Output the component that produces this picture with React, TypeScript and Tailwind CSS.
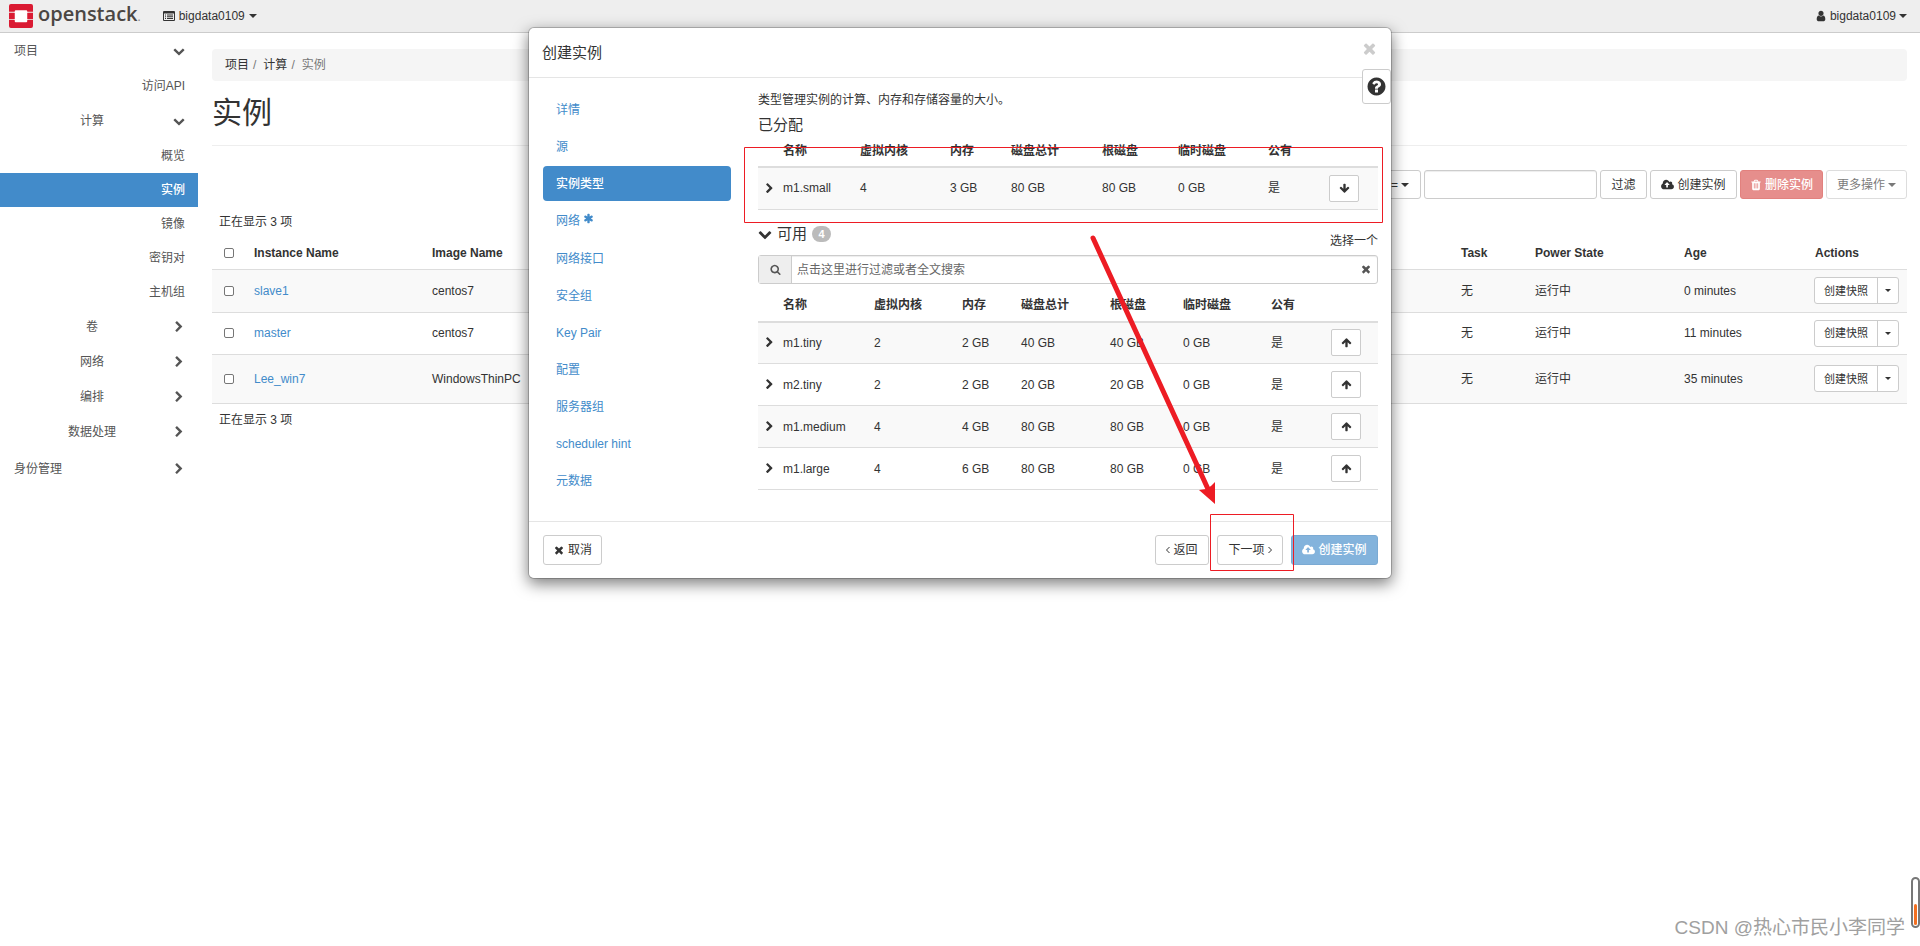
import type { ReactNode } from "react";

const GLYPHS = {
  times:
    "M1490 1322q0 40-28 68l-136 136q-28 28-68 28t-68-28l-294-294-294 294q-28 28-68 28t-68-28l-136-136q-28-28-28-68t28-68l294-294-294-294q-28-28-28-68t28-68l136-136q28-28 68-28t68 28l294 294 294-294q28-28 68-28t68 28l136 136q28 28 28 68t-28 68l-294 294 294 294q28 28 28 68z",
  right:
    "M1363 877l-742 742q-19 19-45 19t-45-19l-166-166q-19-19-19-45t19-45l531-531-531-531q-19-19-19-45t19-45l166-166q19-19 45-19t45 19l742 742q19 19 19 45t-19 45z",
  down:
    "M1683 808l-742 741q-19 19-45 19t-45-19l-742-741q-19-19-19-45.5t19-45.5l166-165q19-19 45-19t45 19l531 531 531-531q19-19 45-19t45 19l166 165q19 19 19 45.5t-19 45.5z",
  arrow:
    "M1675 971q0 51-37 90l-75 75q-38 38-91 38-54 0-90-38l-294-293v704q0 52-37.5 84.5t-90.5 32.5h-128q-53 0-90.5-32.5t-37.5-84.5v-704l-294 293q-36 38-90 38t-90-38l-75-75q-38-38-38-90 0-53 38-91l651-651q35-37 90-37 54 0 91 37l651 651q37 39 37 91z",
  question:
    "M1024 1376v-192q0-14-9-23t-23-9h-192q-14 0-23 9t-9 23v192q0 14 9 23t23 9h192q14 0 23-9t9-23zm256-672q0-88-55.5-163t-138.5-116-170-41q-243 0-371 213-15 24 8 42l132 100q7 6 19 6 16 0 25-12 53-68 86-92 34-24 86-24 48 0 85.5 26t37.5 59q0 38-20 61t-68 45q-63 28-115.5 86.5t-52.5 125.5v36q0 14 9 23t23 9h192q14 0 23-9t9-23q0-19 21.5-49.5t54.5-49.5q32-18 49-28.5t46-35 44.5-48 28-60.5 12.5-81zm384 192q0 209-103 385.5t-279.5 279.5-385.5 103-385.5-103-279.5-279.5-103-385.5 103-385.5 279.5-279.5 385.5-103 385.5 103 279.5 279.5 103 385.5z",
  cloud:
    "M1216 864q0-14-9-23l-352-352q-9-9-23-9t-23 9l-351 351q-10 12-10 24 0 14 9 23t23 9h224v352q0 13 9.5 22.5t22.5 9.5h192q13 0 22.5-9.5t9.5-22.5v-352h224q13 0 22.5-9.5t9.5-22.5zm640 288q0 159-112.5 271.5t-271.5 112.5h-1088q-185 0-316.5-131.5t-131.5-316.5q0-130 70-240t188-165q-2-30-2-43 0-212 150-362t362-150q156 0 285.5 87t188.5 231q71-62 166-62 106 0 181 75t75 181q0 76-41 138 130 31 213.5 135.5t83.5 238.5z",
  trash:
    "M704 1376v-704q0-14-9-23t-23-9h-64q-14 0-23 9t-9 23v704q0 14 9 23t23 9h64q14 0 23-9t9-23zm256 0v-704q0-14-9-23t-23-9h-64q-14 0-23 9t-9 23v704q0 14 9 23t23 9h64q14 0 23-9t9-23zm256 0v-704q0-14-9-23t-23-9h-64q-14 0-23 9t-9 23v704q0 14 9 23t23 9h64q14 0 23-9t9-23zm-544-992h448l-48-117q-7-9-17-11h-317q-10 2-17 11zm928 32v64q0 14-9 23t-23 9h-96v948q0 83-47 143.5t-113 60.5h-832q-66 0-113-58.5t-47-141.5v-952h-96q-14 0-23-9t-9-23v-64q0-14 9-23t23-9h309l70-167q15-37 54-63t79-26h320q40 0 79 26t54 63l70 167h309q14 0 23 9t9 23z",
  search:
    "M1216 832q0-185-131.5-316.5t-316.5-131.5-316.5 131.5-131.5 316.5 131.5 316.5 316.5 131.5 316.5-131.5 131.5-316.5zm512 832q0 52-38 90t-90 38q-54 0-90-38l-343-342q-179 124-399 124-143 0-273.5-55.5t-225-150-150-225-55.5-273.5 55.5-273.5 150-225 225-150 273.5-55.5 273.5 55.5 225 150 150 225 55.5 273.5q0 220-124 399l343 343q37 37 37 90z",
  user:
    "M1536 1399q0 109-62.5 187t-150.5 78h-854q-88 0-150.5-78t-62.5-187q0-85 8.5-160.5t31.5-152 58.5-131 94-89 134.5-34.5q131 128 313 128t313-128q76 0 134.5 34.5t94 89 58.5 131 31.5 152 8.5 160.5zm-256-887q0 159-112.5 271.5t-271.5 112.5-271.5-112.5-112.5-271.5 112.5-271.5 271.5-112.5 271.5 112.5 112.5 271.5z",
  asterisk:
    "M1546 1050q46 26 59.5 77.5t-12.5 97.5l-64 110q-26 46-77.5 59.5t-97.5-12.5l-266-153v307q0 52-38 90t-90 38h-128q-52 0-90-38t-38-90v-307l-266 153q-46 26-97.5 12.5t-77.5-59.5l-64-110q-26-46-12.5-97.5t59.5-77.5l266-154-266-154q-46-26-59.5-77.5t12.5-97.5l64-110q26-46 77.5-59.5t97.5 12.5l266 153v-307q0-52 38-90t90-38h128q52 0 90 38t38 90v307l266-153q46-26 97.5-12.5t77.5 59.5l64 110q26 46 12.5 97.5t-59.5 77.5l-266 154z",
};

function Glyph({ name, className = "size-3" }: { name: keyof typeof GLYPHS; className?: string }) {
  return (
    <svg
      viewBox={name === "cloud" ? "-64 0 1920 1792" : "0 0 1792 1792"}
      fill="currentColor"
      aria-hidden="true"
      className={`shrink-0 ${className}`}
    >
      <path d={GLYPHS[name]} />
    </svg>
  );
}

function Caret() {
  return (
    <svg viewBox="0 0 8 4" fill="currentColor" aria-hidden="true" className="h-1 w-2 shrink-0">
      <path d="M0 0h8L4 4z" />
    </svg>
  );
}

function Angle({ flip = false }: { flip?: boolean }) {
  return (
    <svg viewBox="0 0 4 8" fill="none" stroke="currentColor" aria-hidden="true" className="h-2 w-1 shrink-0">
      <path d={flip ? "M.5 1l3 3-3 3" : "M3.5 1l-3 3 3 3"} />
    </svg>
  );
}

const TONES = {
  plain: "border-[#ccc] bg-white",
  muted: "border-[#ccc] bg-white opacity-65",
  danger: "border-[#d43f3a] bg-[#d9534f] font-medium text-white opacity-65",
  primary: "border-[#357ebd] bg-[#428bca] font-medium text-white opacity-65",
};

function Button({
  children,
  tone = "plain",
  className = "justify-center",
}: {
  children: ReactNode;
  tone?: keyof typeof TONES;
  className?: string;
}) {
  return (
    <button
      type="button"
      className={`flex items-center gap-[3px] rounded-[3px] border whitespace-nowrap ${TONES[tone]} ${className}`}
    >
      {children}
    </button>
  );
}

function Logo() {
  return (
    <a href="#home" aria-label="openstack" className="flex items-center gap-[5px] pl-[9px] text-[#4b4643]">
      <svg viewBox="0 0 25 25" aria-hidden="true" className="size-6">
        <path fill="#fff" d="M5 5h15v15H5z" />
        <path
          fill="#da1a32"
          d="M2 0h21a2 2 0 0 1 2 2v6h-6V7.500a1 1 0 0 0-1-1H7a1 1 0 0 0-1 1V8H0V2a2 2 0 0 1 2-2zM0 9h6v6.500H0zM19 9h6v6.500h-6zM0 16.500h6V18a1 1 0 0 0 1 1h11a1 1 0 0 0 1-1v-1.500h6V23a2 2 0 0 1-2 2H2a2 2 0 0 1-2-2z"
        />
      </svg>
      <span className="pb-0.5 font-['Open_Sans',sans-serif] text-[20px] leading-6 font-semibold">
        openstack<span className="text-[12px] font-normal text-[#8a8683]">.</span>
      </span>
    </a>
  );
}

function Header() {
  return (
    <header className="flex h-[33px] items-center justify-between border-b border-[#ccc] bg-[#eee]">
      <div className="flex items-center gap-[22px]">
        <Logo />
        <button type="button" className="flex items-center gap-1">
          <svg viewBox="0 0 12 10" aria-hidden="true" className="h-2.5 w-3">
            <path
              fill="#333"
              d="M1 0h10a1 1 0 0 1 1 1v8a1 1 0 0 1-1 1H1a1 1 0 0 1-1-1V1a1 1 0 0 1 1-1zM1 2.500V9h10V2.500zM2 3.500h1v1H2zM4 3.500h6v1H4zM2 5.300h1v1H2zM4 5.300h6v1H4zM2 7.100h1v1H2zM4 7.100h6v1H4z"
              fillRule="evenodd"
            />
          </svg>
          bigdata0109
          <Caret />
        </button>
      </div>
      <button type="button" className="mr-[13px] flex items-center gap-[3px]">
        <Glyph name="user" />
        bigdata0109
        <Caret />
      </button>
    </header>
  );
}

function Group({ label, open = false, root = false }: { label: string; open?: boolean; root?: boolean }) {
  return (
    <button type="button" className="flex h-[35px] w-full items-center justify-between pr-[13px] pl-[14px]">
      <span className={root ? "" : "w-[156px] text-center"}>{label}</span>
      <Glyph name={open ? "down" : "right"} />
    </button>
  );
}

function Leaf({ label, active = false }: { label: string; active?: boolean }) {
  return (
    <a
      href="#panel"
      className={`flex h-[34px] items-center justify-end pr-[13px] ${active ? "bg-[#428bca] font-medium text-white" : ""}`}
    >
      {label}
    </a>
  );
}

function Sidebar() {
  return (
    <nav className="w-[198px] shrink-0 text-[#555]">
      <Group label="项目" open root />
      <div className="pt-px">
        <Leaf label="访问API" />
      </div>
      <Group label="计算" open />
      <div className="pt-px">
        <Leaf label="概览" />
        <Leaf label="实例" active />
        <Leaf label="镜像" />
        <Leaf label="密钥对" />
        <Leaf label="主机组" />
      </div>
      <div className="pb-0.5">
        <Group label="卷" />
        <Group label="网络" />
        <Group label="编排" />
        <Group label="数据处理" />
      </div>
      <Group label="身份管理" root />
    </nav>
  );
}

const INSTANCES = [
  { name: "slave1", image: "centos7", age: "0 minutes", row: "h-[43px] bg-[#f9f9f9]" },
  { name: "master", image: "centos7", age: "11 minutes", row: "h-[42px]" },
  { name: "Lee_win7", image: "WindowsThinPC", age: "35 minutes", row: "h-[49px] bg-[#f9f9f9]" },
];

function Tick({ label }: { label: string }) {
  return (
    <input
      type="checkbox"
      aria-label={label}
      className="mx-auto block size-2.5 appearance-none rounded-[2px] border border-[#767676] bg-white"
    />
  );
}

function InstanceTable() {
  return (
    <table className="w-full table-fixed text-left">
      <colgroup>
        <col className="w-[34px]" />
        <col className="w-[178px]" />
        <col />
        <col className="w-[74px]" />
        <col className="w-[149px]" />
        <col className="w-[131px]" />
        <col className="w-[100px]" />
      </colgroup>
      <thead>
        <tr className="h-[35px] border-b border-[#ddd]">
          <th className="pt-1">
            <Tick label="全选" />
          </th>
          <th className="px-2 pt-1">Instance Name</th>
          <th className="px-2 pt-1">Image Name</th>
          <th className="px-2 pt-1">Task</th>
          <th className="px-2 pt-1">Power State</th>
          <th className="px-2 pt-1">Age</th>
          <th className="px-2 pt-1">Actions</th>
        </tr>
      </thead>
      <tbody>
        {INSTANCES.map((item) => (
          <tr key={item.name} className={`border-b border-[#ddd] ${item.row}`}>
            <td>
              <Tick label={item.name} />
            </td>
            <td className="px-2">
              <a href="#instance" className="text-[#428bca]">
                {item.name}
              </a>
            </td>
            <td className="px-2">{item.image}</td>
            <td className="px-2">无</td>
            <td className="px-2">运行中</td>
            <td className="px-2">{item.age}</td>
            <td className="px-[7px]">
              <div className="flex h-[27px] w-[85px] rounded-[3px] border border-[#ccc] bg-white text-[11px]">
                <button type="button" className="flex-1 border-r border-[#ccc] whitespace-nowrap">
                  创建快照
                </button>
                <button type="button" aria-label="更多" className="flex w-5 items-center justify-center">
                  <svg viewBox="0 0 6 3" fill="currentColor" aria-hidden="true" className="h-[3px] w-1.5">
                    <path d="M0 0h6L3 3z" />
                  </svg>
                </button>
              </div>
            </td>
          </tr>
        ))}
      </tbody>
    </table>
  );
}

function Content() {
  return (
    <main className="min-w-0 flex-1 pt-4 pr-[13px] pl-[14px]">
      <nav aria-label="breadcrumb" className="flex h-8 items-center gap-1 rounded bg-[#f5f5f5] px-[13px]">
        <a href="#project">项目</a>
        <span className="pr-[3px] text-[#777]">/</span>
        <a href="#compute">计算</a>
        <span className="pr-[3px] text-[#777]">/</span>
        <span className="text-[#777]">实例</span>
      </nav>
      <h1 className="mb-6 flex h-[65px] items-center border-b border-[#eee] text-[30px]">实例</h1>
      <div className="flex h-[29px] justify-end gap-[3px]">
        <Button className="w-[140px] justify-end pr-[11px]">
          = <Caret />
        </Button>
        <input
          type="text"
          aria-label="过滤条件"
          className="w-[173px] rounded-[3px] border border-[#ccc] px-2 shadow-[inset_0_1px_1px_rgba(0,0,0,0.075)]"
        />
        <Button className="w-[47px] justify-center">过滤</Button>
        <Button className="w-[87px] justify-center">
          <Glyph name="cloud" className="h-3 w-[13px]" />
          创建实例
        </Button>
        <Button tone="danger" className="w-[83px] justify-center">
          <Glyph name="trash" />
          删除实例
        </Button>
        <Button tone="muted" className="w-[81px] justify-center">
          更多操作
          <Caret />
        </Button>
      </div>
      <p className="flex h-[35px] items-end px-[7px] pb-[3px]">正在显示 3 项</p>
      <InstanceTable />
      <p className="px-[7px] pt-[7px]">正在显示 3 项</p>
    </main>
  );
}

const STEPS = [
  "详情",
  "源",
  "实例类型",
  "网络",
  "网络接口",
  "安全组",
  "Key Pair",
  "配置",
  "服务器组",
  "scheduler hint",
  "元数据",
];

function Steps() {
  return (
    <ul className="mt-px flex w-[188px] shrink-0 flex-col gap-0.5">
      {STEPS.map((step) => (
        <li key={step}>
          <a
            href="#step"
            className={`flex items-center rounded px-[13px] ${
              step === "网络" ? "h-9" : "h-[35px]"
            } ${step === "实例类型" ? "bg-[#428bca] font-medium text-white" : "text-[#428bca]"}`}
          >
            {step}
            {step === "网络" && <Glyph name="asterisk" className="mb-1.5 ml-[3px] size-[11px]" />}
          </a>
        </li>
      ))}
    </ul>
  );
}

const HEADS = ["名称", "虚拟内核", "内存", "磁盘总计", "根磁盘", "临时磁盘", "公有"];

function FlavorTable({ rows, cols, up = false }: { rows: string[][]; cols: string[]; up?: boolean }) {
  return (
    <table className="w-full table-fixed text-left">
      <colgroup>
        <col className="w-[17px]" />
        {cols.map((width, i) => (
          <col key={i} className={width} />
        ))}
        <col />
      </colgroup>
      <thead>
        <tr className="h-8 border-b-2 border-[#ddd]">
          <td />
          {HEADS.map((head) => (
            <th key={head} className="px-2 whitespace-nowrap">
              {head}
            </th>
          ))}
          <td />
        </tr>
      </thead>
      <tbody>
        {rows.map((row) => (
          <tr key={row[0]} className="h-[42px] border-b border-[#ddd] odd:bg-[#f9f9f9]">
            <td className="pl-1.5">
              <Glyph name="right" className="size-[11px]" />
            </td>
            {row.map((cell, i) => (
              <td key={i} className="px-2 whitespace-nowrap">
                {cell}
              </td>
            ))}
            <td className="px-2">
              <button
                type="button"
                aria-label={up ? "分配" : "移除"}
                className="flex h-[27px] w-[30px] items-center justify-center rounded-[2px] border border-[#ccc] bg-white"
              >
                <Glyph name="arrow" className={up ? "size-[11px]" : "size-[11px] rotate-180"} />
              </button>
            </td>
          </tr>
        ))}
      </tbody>
    </table>
  );
}

const ALLOCATED = [["m1.small", "4", "3 GB", "80 GB", "80 GB", "0 GB", "是"]];
const AVAILABLE = [
  ["m1.tiny", "2", "2 GB", "40 GB", "40 GB", "0 GB", "是"],
  ["m2.tiny", "2", "2 GB", "20 GB", "20 GB", "0 GB", "是"],
  ["m1.medium", "4", "4 GB", "80 GB", "80 GB", "0 GB", "是"],
  ["m1.large", "4", "6 GB", "80 GB", "80 GB", "0 GB", "是"],
];

function FlavorStep() {
  return (
    <div className="min-w-0 flex-1">
      <p>类型管理实例的计算、内存和存储容量的大小。</p>
      <h2 className="mt-1.5 text-[15px] leading-5">已分配</h2>
      <FlavorTable
        rows={ALLOCATED}
        cols={["w-[77px]", "w-[90px]", "w-[61px]", "w-[91px]", "w-[76px]", "w-[90px]", "w-[61px]"]}
      />
      <div className="flex h-[45px] justify-between">
        <button type="button" className="mt-3.5 flex h-5 items-center text-[15px]">
          <Glyph name="down" className="size-[14px]" />
          <span className="ml-[5px]">可用</span>
          <span className="ml-[5px] flex h-4 w-[19px] items-center justify-center rounded-full bg-[#bbb] text-[11px] font-bold text-white">
            4
          </span>
        </button>
        <span className="mt-[22px]">选择一个</span>
      </div>
      <div className="mb-1.5 flex h-[29px] items-center rounded-[3px] border border-[#ccc] bg-white shadow-[inset_0_1px_1px_rgba(0,0,0,0.075)]">
        <span className="flex h-full w-[33px] items-center justify-center border-r border-[#ccc] bg-[#eee] text-[#555]">
          <Glyph name="search" className="size-[11px]" />
        </span>
        <input
          type="search"
          aria-label="搜索"
          placeholder="点击这里进行过滤或者全文搜索"
          className="h-full min-w-0 flex-1 bg-transparent px-[5px] pt-0.5 placeholder:text-[#666]"
        />
        <button type="button" aria-label="清除" className="mr-[5px] text-[#555]">
          <Glyph name="times" />
        </button>
      </div>
      <FlavorTable
        up
        rows={AVAILABLE}
        cols={["w-[91px]", "w-[88px]", "w-[59px]", "w-[89px]", "w-[73px]", "w-[88px]", "w-[60px]"]}
      />
    </div>
  );
}

/* Hand-drawn marks over the dialog: two frames and the arrow between them. */
function Marks() {
  return (
    <svg
      viewBox="0 0 862 550"
      aria-hidden="true"
      className="pointer-events-none absolute top-0 left-0 h-[550px] w-[862px]"
    >
      <g fill="none" stroke="#ed1c24">
        <path d="M215.500 119.500h638v75h-638zM681.500 486.500h83v56h-83z" />
        <path d="M564 210L679 461" strokeWidth="5" strokeLinecap="round" />
      </g>
      <path fill="#ed1c24" d="M670 462l7-1 5-3 4-4v22z" />
    </svg>
  );
}

function Dialog() {
  return (
    <div className="absolute inset-x-0 top-[27px] mx-auto w-full max-w-[864px]">
      <section
        role="dialog"
        aria-label="创建实例"
        className="relative rounded-md border border-black/20 bg-white bg-clip-padding shadow-[0_5px_15px_rgba(0,0,0,0.5)]"
      >
        <header className="flex h-[50px] items-center justify-between border-b border-[#e5e5e5] px-[13px]">
          <h2 className="text-[15px]">创建实例</h2>
          <button type="button" aria-label="关闭" className="mb-2 text-[#ccc]">
            <Glyph name="times" className="size-[17px]" />
          </button>
        </header>
        <button
          type="button"
          aria-label="帮助"
          className="absolute top-[41px] right-0 flex h-[35px] w-[29px] items-center justify-center rounded-[3px] border border-[#ccc] bg-white"
        >
          <Glyph name="question" className="size-[21px]" />
        </button>
        <div className="flex gap-[27px] pt-[13px] pr-[13px] pb-[23px] pl-[14px]">
          <Steps />
          <FlavorStep />
        </div>
        <footer className="flex h-[57px] items-center gap-2 border-t border-[#e5e5e5] pr-[13px] pl-[14px]">
          <Button className="mr-auto h-[30px] w-[59px] justify-center">
            <Glyph name="times" />
            取消
          </Button>
          <Button className="h-[30px] w-[54px] justify-center">
            <Angle />
            返回
          </Button>
          <Button className="h-[30px] w-[66px] justify-center">
            下一项
            <Angle flip />
          </Button>
          <Button tone="primary" className="h-[30px] w-[87px] justify-center">
            <Glyph name="cloud" className="h-3 w-[13px]" />
            创建实例
          </Button>
        </footer>
        <Marks />
      </section>
    </div>
  );
}

export default function App() {
  return (
    <div className="relative min-h-screen overflow-hidden bg-white font-['Liberation_Sans','Noto_Sans_CJK_SC',sans-serif] text-[12px] leading-[18px] text-[#333]">
      <Header />
      <div className="flex">
        <Sidebar />
        <Content />
      </div>
      <Dialog />
      <div className="absolute right-0 bottom-[18px] h-[51px] w-[9px] rounded-full border-2 border-[#777] bg-white p-px">
        <div className="mt-6 h-[21px] rounded-full bg-[#f37021]" />
      </div>
      <p className="absolute right-[15px] bottom-1 text-[19px] leading-7 text-[#a0a0a0]">CSDN @热心市民小李同学</p>
    </div>
  );
}
